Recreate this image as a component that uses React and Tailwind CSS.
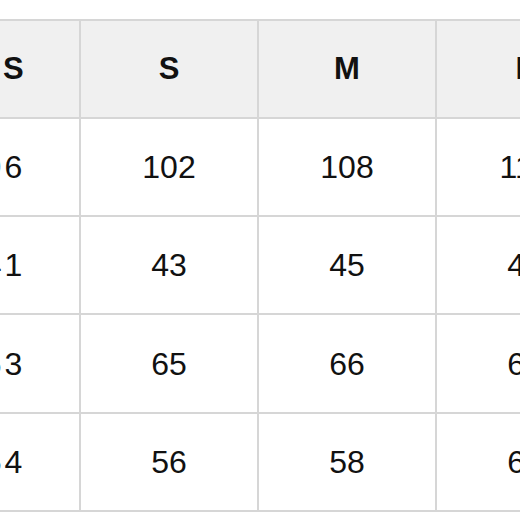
export default function App() {
  const head = ['XS', 'S', 'M', 'L']
  const rows = [
    ['96', '102', '108', '114'],
    ['41', '43', '45', '47'],
    ['63', '65', '66', '67'],
    ['54', '56', '58', '60'],
  ]

  return (
    <div className="w-[520px] h-[520px] overflow-hidden bg-white pt-[19px]" style={{ fontFamily: '"Liberation Sans", Arial, sans-serif' }}>
      <div className="ml-[-75px] w-max grid grid-cols-[152px_176px_176px_176px] grid-rows-[96px_96px_96px_97px_96px] gap-[2px] p-[2px] bg-[#d6d6d6]">
        {head.map((h, j) => (
          <div key={h} className={`bg-[#f0f0f0] flex items-center justify-center text-[31px] font-bold text-[#111] ${j === 0 ? 'tracking-[3px]' : ''}`}>
            {h}
          </div>
        ))}
        {rows.map((r, i) =>
          r.map((v, j) => (
            <div key={`${i}-${j}`} className={`bg-white flex items-center justify-center text-[32px] text-[#111] ${j === 0 ? 'tracking-[3px] pl-[3px]' : ''}`}>
              {v}
            </div>
          ))
        )}
      </div>
    </div>
  )
}
